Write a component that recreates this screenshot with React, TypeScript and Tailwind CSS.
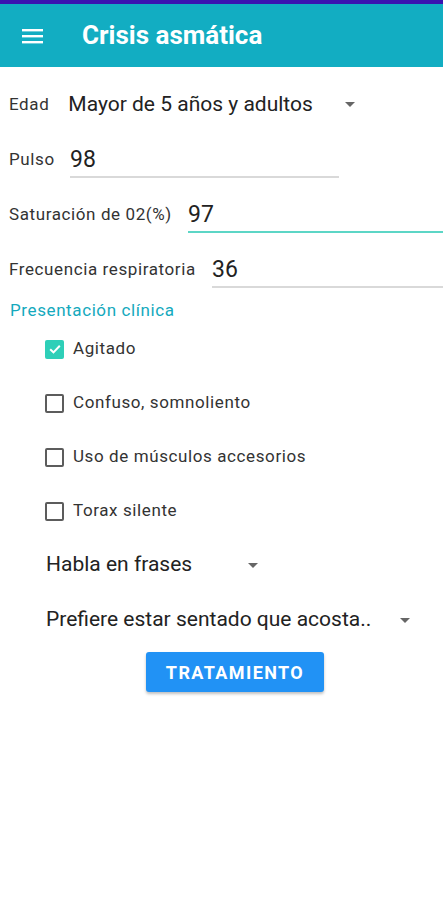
import { useState } from 'react';

const DropArrow = () => (
  <svg width="10" height="5" viewBox="0 0 10 5" className="shrink-0">
    <path d="M0 0 L10 0 L5 5 Z" fill="#666" />
  </svg>
);

function Field({ label, value, lineStart, lineEnd, active }: { label: string; value: string; lineStart: number; lineEnd?: number; active?: boolean }) {
  return (
    <div className="flex items-end h-[55px] pl-[9px]">
      <span className="shrink-0 text-[17px] leading-[20px] tracking-[0.6px] text-[#333] pb-[9px] whitespace-nowrap" style={{ width: lineStart - 9 }}>
        {label}
      </span>
      <div
        className={`border-b-2 ${active ? 'border-[#5cd6c6]' : 'border-[#d9d9d9]'}`}
        style={{ width: (lineEnd ?? 443) - lineStart }}
      >
        <div className="text-[23px] leading-[24px] text-[#222] pb-[4px]">{value}</div>
      </div>
    </div>
  );
}

const options = ['Agitado', 'Confuso, somnoliento', 'Uso de músculos accesorios', 'Torax silente'];

export default function App() {
  const [checked, setChecked] = useState<boolean[]>([true, false, false, false]);

  return (
    <div className="w-[443px] min-h-[900px] bg-white font-['Roboto',sans-serif]">
      <div className="h-[4px] bg-[#3a14b0]" />
      <header className="h-[63px] bg-[#12adc2] flex items-center">
        <svg width="22" height="16" viewBox="0 0 22 16" className="ml-[22px]">
          <rect x="0" y="1" width="21" height="2.4" fill="#fff" />
          <rect x="0" y="7" width="21" height="2.4" fill="#fff" />
          <rect x="0" y="13" width="21" height="2.4" fill="#fff" />
        </svg>
        <h1 className="ml-[38px] text-white text-[26px] font-bold">Crisis asmática</h1>
      </header>

      <div className="flex items-center h-[74px] pl-[9px] pt-[2px]">
        <span className="text-[17px] tracking-[0.6px] text-[#333]">Edad</span>
        <span className="ml-[19px] text-[21px] text-[#222]">Mayor de 5 años y adultos</span>
        <div className="ml-[32px] mb-[1px]"><DropArrow /></div>
      </div>

      <div className="-mt-[18px]">
        <Field label="Pulso" value="98" lineStart={70} lineEnd={339} />
        <Field label="Saturación de 02(%)" value="97" lineStart={188} active />
        <Field label="Frecuencia respiratoria" value="36" lineStart={212} />
      </div>

      <p className="pl-[10px] mt-[12px] text-[17px] leading-[20px] tracking-[0.6px] text-[#14a9bd]">Presentación clínica</p>

      <div className="flex flex-col pl-[45px] mt-[18px] gap-[32px]">
        {options.map((opt, i) => (
          <label key={opt} className="flex items-center h-[22px] cursor-pointer">
            <button
              onClick={() => setChecked(c => c.map((v, j) => (j === i ? !v : v)))}
              className={`w-[19px] h-[19px] rounded-[2px] flex items-center justify-center ${checked[i] ? 'bg-[#2ecfb8]' : 'border-2 border-[#5c5c5c]'}`}
            >
              {checked[i] && (
                <svg width="14" height="14" viewBox="0 0 14 14">
                  <path d="M2.2 7.2 L5.5 10.4 L11.8 3.8" stroke="#fff" strokeWidth="2" fill="none" />
                </svg>
              )}
            </button>
            <span className="ml-[9px] text-[17px] tracking-[0.6px] text-[#333]">{opt}</span>
          </label>
        ))}
      </div>

      <div className="flex items-center pl-[46px] mt-[28px] h-[30px]">
        <span className="text-[21px] text-[#222]">Habla en frases</span>
        <div className="ml-[56px]"><DropArrow /></div>
      </div>

      <div className="flex items-center pl-[46px] mt-[25px] h-[30px]">
        <span className="text-[21px] text-[#222]">Prefiere estar sentado que acosta..</span>
        <div className="ml-auto mr-[33px]"><DropArrow /></div>
      </div>

      <div className="flex justify-center pl-[27px] mt-[17px]">
        <button className="w-[178px] h-[40px] rounded-[3px] bg-[#2192f5] text-white text-[18px] font-bold tracking-[1.4px] shadow-[0_2px_3px_rgba(0,0,0,0.25)]">
          TRATAMIENTO
        </button>
      </div>
    </div>
  );
}
